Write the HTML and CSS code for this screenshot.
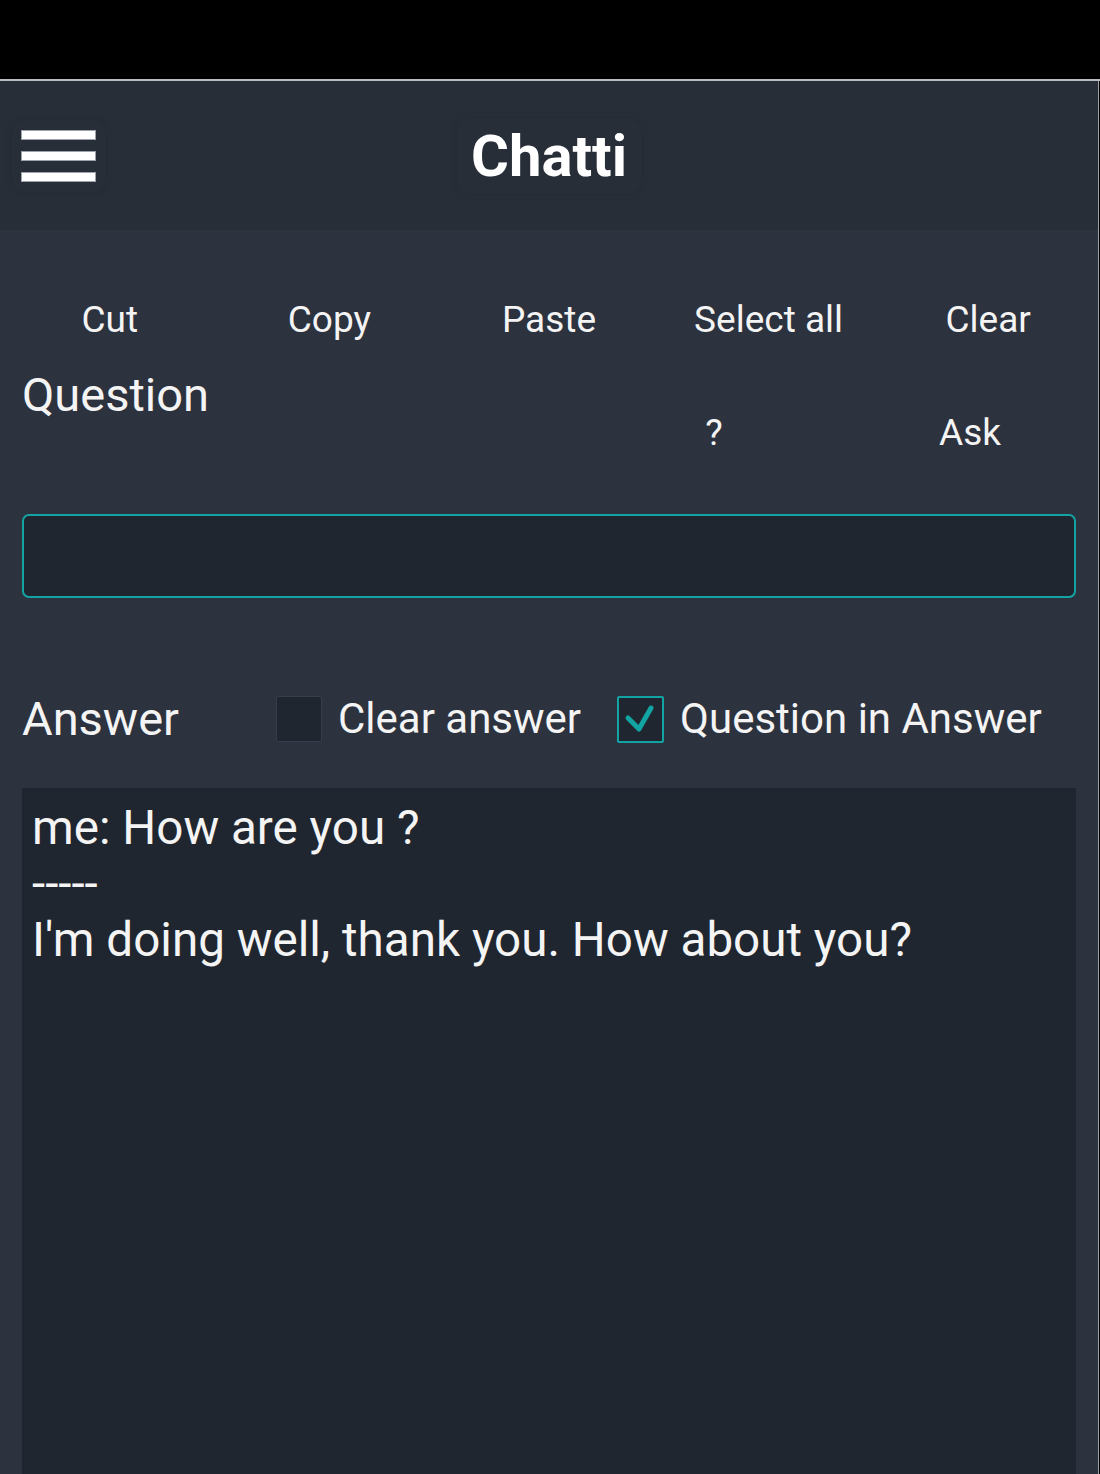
FILE: index.html
```html
<!DOCTYPE html>
<html lang="en">
<head>
<meta charset="utf-8">
<title>Chatti</title>
<link rel="stylesheet" href="styles.css">
</head>
<body>
<div class="statusbar"></div>
<div class="app">
  <header class="appbar">
    <div class="menu" aria-label="Menu">
      <span class="bar"></span>
      <span class="bar"></span>
      <span class="bar"></span>
    </div>
    <h1 class="title">Chatti</h1>
    <div class="appbar-spacer"></div>
  </header>

  <nav class="edit-tools">
    <button class="tool-btn">Cut</button>
    <button class="tool-btn">Copy</button>
    <button class="tool-btn">Paste</button>
    <button class="tool-btn">Select all</button>
    <button class="tool-btn">Clear</button>
  </nav>

  <div class="question-row">
    <label class="section-label question-label">Question</label>
    <div class="ask-buttons">
      <button class="tool-btn ask-btn">?</button>
      <button class="tool-btn ask-btn">Ask</button>
    </div>
  </div>

  <div class="question-field">
    <input class="question-input" type="text">
  </div>

  <div class="answer-row">
    <span class="section-label answer-label">Answer</span>
    <span class="check-group">
      <span class="checkbox"></span>
      <span class="check-text">Clear answer</span>
    </span>
    <span class="check-group check-group-second">
      <span class="checkbox checked">
        <svg viewBox="0 0 47 47" width="47" height="47"><path d="M11 22 L22 33 L34 12" fill="none" stroke="#12a3a3" stroke-width="5" stroke-linecap="round" stroke-linejoin="round"/></svg>
      </span>
      <span class="check-text">Question in Answer</span>
    </span>
  </div>

  <div class="answer-box">me: How are you ?
-----
I'm doing well, thank you. How about you?</div>
</div>
</body>
</html>
```

FILE: styles.css
```css
* {
  box-sizing: border-box;
}

html, body {
  margin: 0;
  padding: 0;
}

body {
  background: #000;
  height: 1474px;
  overflow: hidden;
  font-family: Roboto, "Liberation Sans", sans-serif;
  color: #f4f4f4;
}

.statusbar {
  height: 81px;
  background: #000;
  border-bottom: 2px solid #b9bcc0;
}

.app {
  width: 1099px;
  height: 1393px;
  background: #2c323e;
  border-right: 1px solid #9a9fa8;
  overflow: hidden;
}

.appbar {
  height: 149px;
  background: #282e38;
  display: grid;
  grid-template-columns: 1fr auto 1fr;
  align-items: center;
}

.menu {
  justify-self: start;
  margin-left: 12px;
  padding: 10px 9px;
  border-radius: 14px;
  box-shadow: 0 0 10px rgba(0, 0, 0, 0.10);
  display: flex;
  flex-direction: column;
  gap: 11px;
}

.bar {
  display: block;
  width: 75px;
  height: 10px;
  background: #fff;
  border: 1px solid #9ea3ab;
}

.title {
  margin: 0;
  font-size: 58px;
  font-weight: 700;
  line-height: 70px;
  color: #fff;
  padding: 2px 14px;
  border-radius: 12px;
  box-shadow: 0 0 10px rgba(0, 0, 0, 0.10);
}

.tool-btn {
  background: none;
  border: 0;
  padding: 0;
  margin: 0;
  color: #f4f4f4;
  font-family: Roboto, "Liberation Sans", sans-serif;
  font-size: 37px;
}

.edit-tools {
  margin-top: 40px;
  height: 100px;
  display: grid;
  grid-template-columns: repeat(5, 1fr);
}

.edit-tools .tool-btn {
  line-height: 100px;
}

.question-row {
  height: 100px;
  display: flex;
}

.section-label {
  font-size: 47px;
  color: #f4f4f4;
}

.question-label {
  padding-left: 22px;
  line-height: 50px;
  align-self: flex-start;
}

.ask-buttons {
  margin-left: auto;
  align-self: flex-end;
  display: flex;
}

.ask-btn {
  width: 256px;
  height: 74px;
  line-height: 74px;
}

.question-field {
  margin: 44px 22px 0;
}

.question-input {
  display: block;
  width: 100%;
  height: 84px;
  background: #20262f;
  border: 2px solid #13a3a3;
  border-radius: 7px;
  outline: none;
  color: #fff;
  font-family: Roboto, "Liberation Sans", sans-serif;
  font-size: 40px;
  padding: 0 12px;
}

.answer-row {
  margin-top: 81px;
  height: 80px;
  padding-left: 22px;
  display: flex;
  align-items: center;
}

.answer-label {
  width: 254px;
  line-height: 56px;
}

.check-group {
  display: flex;
  align-items: center;
}

.check-group-second {
  margin-left: 36px;
}

.checkbox {
  width: 46px;
  height: 46px;
  background: #20262f;
  border: 1px solid #363e4b;
  border-radius: 2px;
  display: flex;
  align-items: center;
  justify-content: center;
  overflow: hidden;
}

.checkbox.checked {
  width: 47px;
  height: 47px;
  border: 2px solid #12a3a3;
}

.checkbox svg {
  flex: none;
}

.check-text {
  margin-left: 16px;
  font-size: 42px;
  line-height: 56px;
  color: #f4f4f4;
}

.answer-box {
  margin: 29px 22px 0;
  height: 720px;
  background: #20262f;
  padding: 12px 10px;
  font-size: 47.6px;
  line-height: 56px;
  white-space: pre-wrap;
  color: #f4f4f4;
}
```
